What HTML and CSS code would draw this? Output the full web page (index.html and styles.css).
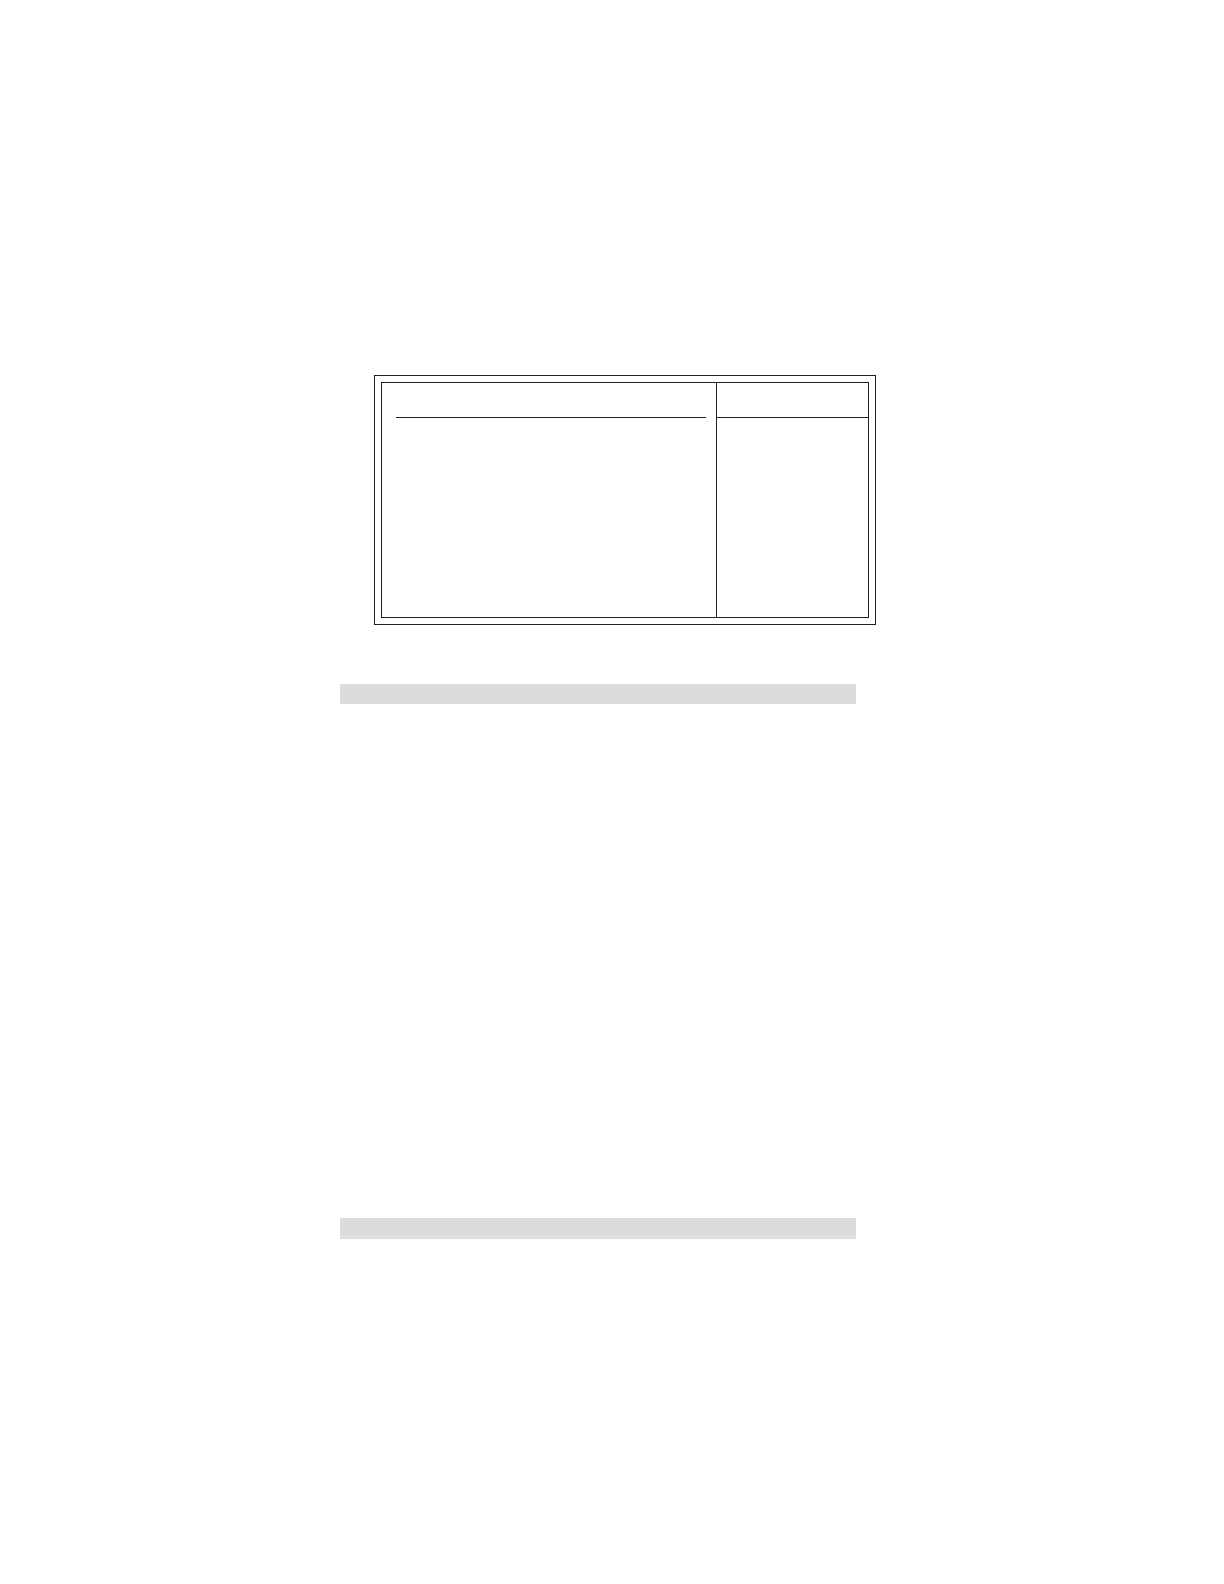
FILE: index.html
```
<!DOCTYPE html>
<html lang="en">
<head>
    <meta charset="UTF-8">
    <meta name="viewport" content="width=device-width, initial-scale=1.0">
    <title>Setup Screen</title>
    <link rel="stylesheet" href="styles.css">
</head>
<body>

    <main class="page">
        <div class="screen">
            <div class="screen-inner">
                <section class="options">
                    <div class="options-header"></div>
                </section>
                <aside class="help">
                    <div class="help-header"></div>
                </aside>
            </div>
        </div>

        <section class="section">
            <div class="band"></div>
        </section>
        <section class="section">
            <div class="band band-lined"></div>
        </section>
    </main>

</body>
</html>
```
FILE: styles.css
```
* {
    box-sizing: border-box;
}
body {
    margin: 0;
    background-color: #fff;
    font-family: "Liberation Sans", sans-serif;
}
.page {
    padding: 375px 348px 0 340px;
}

/* double frame */
.screen {
    margin-left: 34px;
    margin-bottom: 59px;
    padding: 6px;
    border: 1px solid #231f20;
}
.screen-inner {
    display: grid;
    grid-template-columns: 1fr 152px;
    min-height: 236px;
    border: 1px solid #231f20;
}
.options {
    padding: 0 10px 0 14px;
}
.options-header, .help-header {
    height: 35px;
    border-bottom: 1px solid #231f20;
}
.help {
    border-left: 1px solid #231f20;
}

/* heading bands */
.section {
    min-height: 534px;
    padding-right: 20px;
}
.section:last-child {
    min-height: 0;
}
.band {
    height: 20px;
    background-color: #dbdddd;
}
.band-lined {
    height: 21px;
    background-image: linear-gradient(#e3e4e4, #e3e4e4);
    background-size: 100% 1px;
    background-position: 0 18px;
    background-repeat: no-repeat;
}
```
